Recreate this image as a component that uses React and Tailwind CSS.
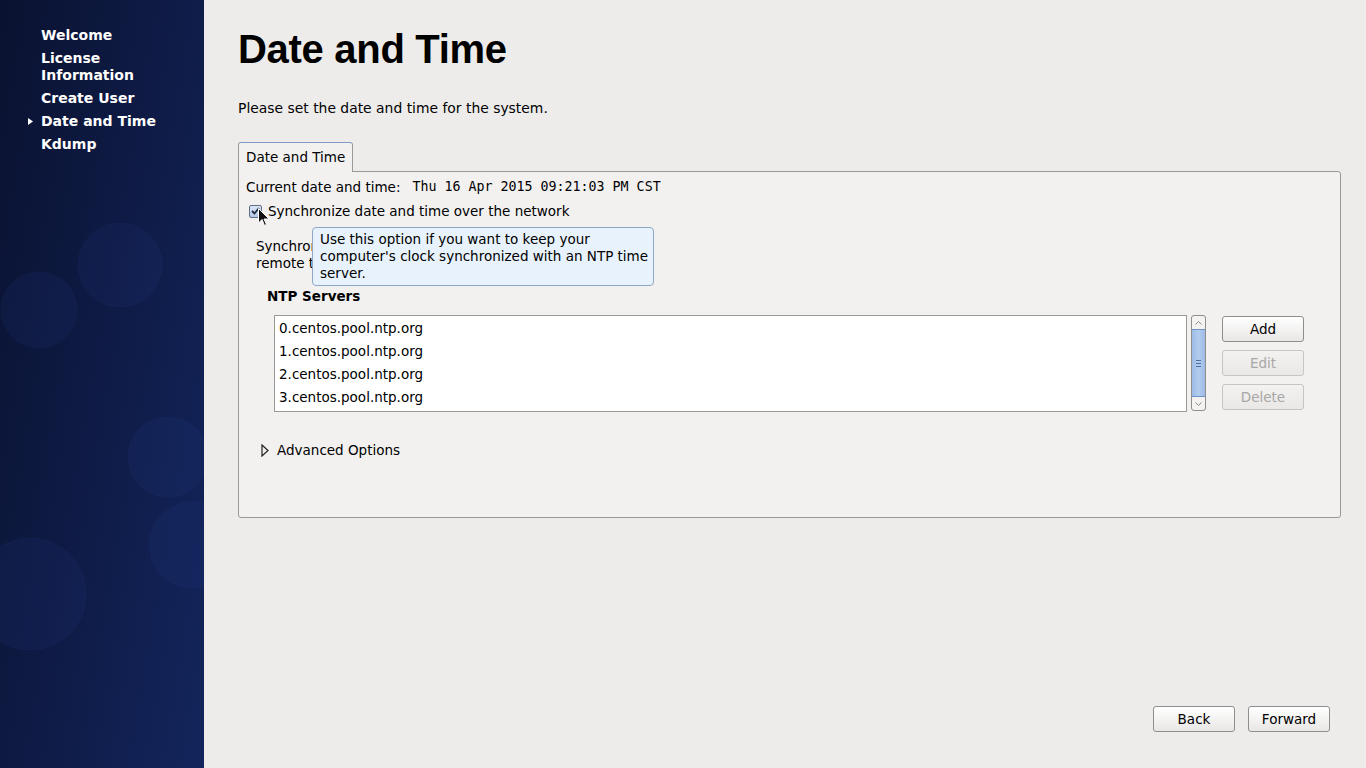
import React from 'react'

const UI = { fontFamily: '"DejaVu Sans", "Noto Sans", sans-serif' }
const MONO = { fontFamily: '"DejaVu Sans Mono", "Liberation Mono", monospace' }
const HEAD = { fontFamily: '"Liberation Sans", Arial, sans-serif' }

const steps = [
  { label: ['Welcome'] },
  { label: ['License', 'Information'] },
  { label: ['Create User'] },
  { label: ['Date and Time'], active: true },
  { label: ['Kdump'] },
]

const servers = ['0.centos.pool.ntp.org', '1.centos.pool.ntp.org', '2.centos.pool.ntp.org', '3.centos.pool.ntp.org']

const Bubbles = () => (
  <svg className="absolute inset-0" width="204" height="768" viewBox="0 0 204 768">
    <g fill="#2a4590" fillOpacity="0.12" stroke="#3a58a8" strokeOpacity="0.08">
      <circle cx="120" cy="265" r="42" />
      <circle cx="39" cy="310" r="38" />
      <circle cx="168" cy="457" r="40" />
      <circle cx="192" cy="545" r="43" />
      <circle cx="30" cy="594" r="56" />
    </g>
  </svg>
)

const Sidebar = () => (
  <aside className="relative w-[204px] shrink-0 h-full overflow-hidden bg-[linear-gradient(100deg,#0a1230_0%,#0f1c48_55%,#13255c_100%)]">
    <Bubbles />
    <ul className="relative pt-[27px] flex flex-col gap-[6px]" style={UI}>
      {steps.map((s) => (
        <li key={s.label[0]} className="relative pl-[41px] text-white font-bold text-[14px] leading-[17px]">
          {s.active && (
            <svg className="absolute left-[28px] top-[5px]" width="5" height="7" viewBox="0 0 5 7">
              <path d="M0 0 L5 3.5 L0 7 Z" fill="#fff" />
            </svg>
          )}
          {s.label.map((l) => (
            <div key={l}>{l}</div>
          ))}
        </li>
      ))}
    </ul>
  </aside>
)

const Btn = ({ children, disabled, className = '' }) => (
  <button
    className={`h-[26px] w-[82px] rounded-[3px] border text-[13.5px] ${
      disabled
        ? 'border-[#c6c5c3] text-[#a8a7a5] bg-[linear-gradient(#f3f2f1,#e9e8e6)]'
        : 'border-[#8f8e8c] text-black bg-[linear-gradient(#ffffff,#e8e7e5)]'
    } ${className}`}
    style={UI}
  >
    {children}
  </button>
)

const Scrollbar = () => (
  <div className="w-[15px] h-[96px] ml-[4px] flex flex-col rounded-[3px] border border-[#8f8e8c] bg-[#f4f3f2] overflow-hidden">
    <div className="h-[13px] flex items-center justify-center">
      <svg width="7" height="4" viewBox="0 0 7 4"><path d="M0.5 3.5 L3.5 0.5 L6.5 3.5" fill="none" stroke="#8a8a8a" /></svg>
    </div>
    <div className="flex-1 mx-[-1px] border border-[#6e91c6] bg-[linear-gradient(90deg,#9cbbe6,#b4cdef,#9cbbe6)] flex flex-col items-center justify-center gap-[2px]">
      <div className="w-[5px] h-px bg-[#4d6f9f]" />
      <div className="w-[5px] h-px bg-[#4d6f9f]" />
      <div className="w-[5px] h-px bg-[#4d6f9f]" />
    </div>
    <div className="h-[13px] flex items-center justify-center">
      <svg width="7" height="4" viewBox="0 0 7 4"><path d="M0.5 0.5 L3.5 3.5 L6.5 0.5" fill="none" stroke="#8a8a8a" /></svg>
    </div>
  </div>
)

const Cursor = () => (
  <svg className="absolute left-[258px] top-[208px]" width="12" height="19" viewBox="0 0 12 19">
    <path d="M0.5 0.5 L0.5 15 L4 11.5 L6.5 17.5 L8.5 16.5 L6 11 L11 11 Z" fill="#111" stroke="#fff" strokeWidth="1" />
  </svg>
)

export default function App() {
  return (
    <div className="relative flex w-[1366px] h-[768px] bg-[#edeceb] text-black overflow-hidden" style={UI}>
      <Sidebar />
      <main className="flex-1 flex flex-col pl-[34px] pr-[25px]">
        <h1 className="mt-[30px] text-[40px] leading-[39px] font-bold tracking-[-0.3px]" style={HEAD}>
          Date and Time
        </h1>
        <p className="mt-[31px] text-[13.9px] leading-[16px]">Please set the date and time for the system.</p>

        <div className="mt-[26px] flex">
          <div className="relative z-10 -mb-px h-[30px] px-[7px] flex items-center rounded-t-[3px] border border-b-0 border-[#9a9996] border-t-[#7e9cc6] bg-[#f2f1f0] text-[13.5px]">
            Date and Time
          </div>
        </div>
        <section className="relative h-[347px] rounded-b-[3px] rounded-tr-[3px] border border-[#9a9996] bg-[#f2f1f0] px-[7px] pt-[7px] text-[13.5px] leading-[16px]">
          <div className="flex items-center">
            <span>Current date and time:</span>
            <span className="ml-[12px] text-[13.3px]" style={MONO}>Thu 16 Apr 2015 09:21:03 PM CST</span>
          </div>

          <label className="mt-[8px] flex items-center">
            <span className="ml-[3px] w-[13px] h-[13px] rounded-[2px] border border-[#5f6f86] bg-[linear-gradient(#dce6f4,#b3c7e4)] flex items-center justify-center">
              <svg width="9" height="8" viewBox="0 0 9 8"><path d="M1 4 L3.5 6.5 L8 1" fill="none" stroke="#1c2a44" strokeWidth="1.8" /></svg>
            </span>
            <span className="ml-[6px]">Synchronize date and time over the network</span>
          </label>

          <div className="mt-[19px] pl-[10px] leading-[17px]">
            <div>Synchronize your computer's clock with a</div>
            <div>remote time server using the Network Time Protocol:</div>
          </div>

          <div className="mt-[16px] pl-[21px] font-bold">NTP Servers</div>

          <div className="mt-[11px] ml-[28px] flex items-start">
            <ul className="flex-1 h-[97px] border border-[#9a9996] bg-white pt-[4px] pl-[4px]">
              {servers.map((s) => (
                <li key={s} className="h-[23px] leading-[17px]">{s}</li>
              ))}
            </ul>
            <Scrollbar />
            <div className="mt-px ml-[16px] mr-[29px] flex flex-col gap-[8px]">
              <Btn>Add</Btn>
              <Btn disabled>Edit</Btn>
              <Btn disabled>Delete</Btn>
            </div>
          </div>

          <div className="mt-[30px] ml-[15px] flex items-center">
            <svg width="8" height="13" viewBox="0 0 8 13"><path d="M1 1 L7 6.5 L1 12 Z" fill="none" stroke="#222" strokeWidth="1.2" /></svg>
            <span className="ml-[8px]">Advanced Options</span>
          </div>

          <div className="absolute left-[73px] top-[55px] w-[342px] h-[59px] rounded-[4px] border border-[#8ea7c6] bg-[#e8f2fc] px-[7px] pt-[3px] leading-[17px] whitespace-nowrap">
            <div>Use this option if you want to keep your</div>
            <div>computer's clock synchronized with an NTP time</div>
            <div>server.</div>
          </div>
        </section>

        <div className="mt-auto mb-[36px] flex justify-end gap-[13px] pr-[11px]">
          <Btn>Back</Btn>
          <Btn>Forward</Btn>
        </div>
      </main>
      <Cursor />
    </div>
  )
}
